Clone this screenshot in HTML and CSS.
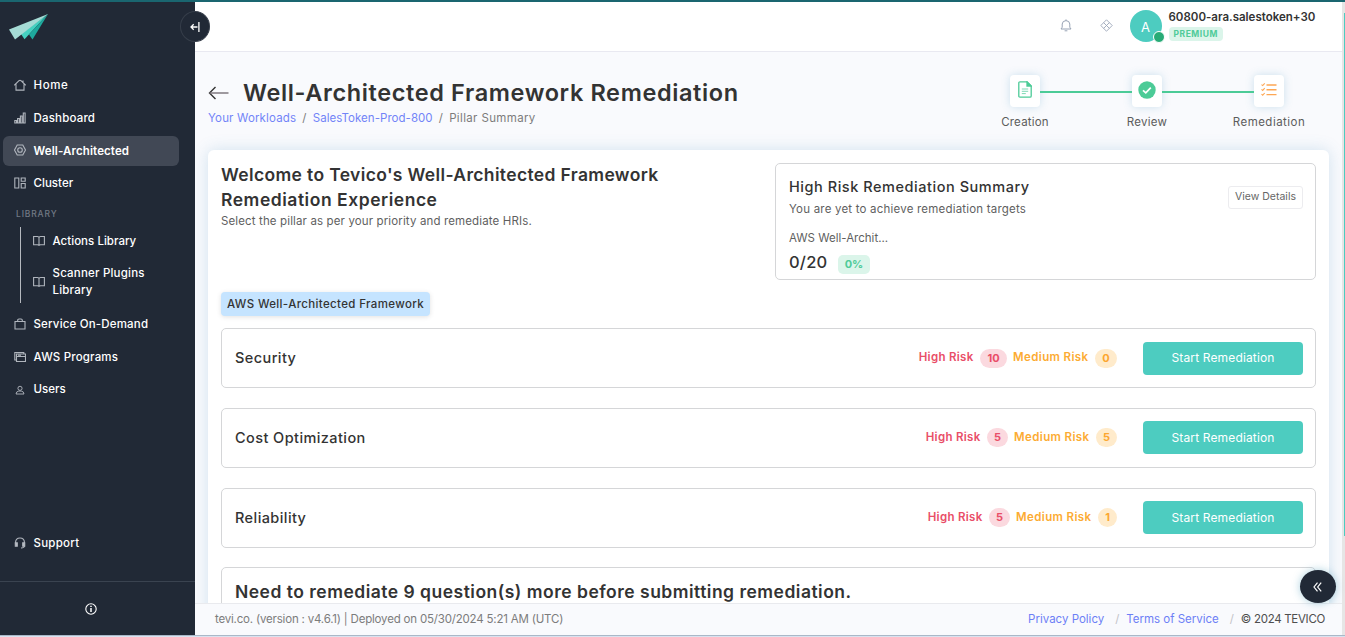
FILE: index.html
```html
<!DOCTYPE html>
<html lang="en">
<head>
<meta charset="utf-8">
<title>Well-Architected Framework Remediation</title>
<link rel="stylesheet" href="styles.css">
</head>
<body>
<div class="app">
  <aside class="sidebar">
    <svg class="logo" width="40" height="26" viewBox="0 0 40 26">
      <path d="M12 20L39 0L15.500 25.200z" fill="#45d0c0"/>
      <path d="M20 20.500L39 0L23.500 25.500z" fill="#1ea99d"/>
      <path d="M0 15.500L39 0L6 25.500z" fill="#a5dbd5"/>
    </svg>
    <button class="collapse" aria-label="Collapse sidebar">
      <svg width="10" height="12" viewBox="0 0 10 12" fill="none" stroke="#fff" stroke-width="1.300"><path d="M1 6h6.500M3.700 3.300L1 6l2.700 2.700M8.900 1v10"/></svg>
    </button>
    <nav class="nav">
      <a class="item home"><svg class="ico" viewBox="0 0 12 12"><path d="M.3 6.300L5 1.700Q6 .9 7 1.700L11.700 6.300M2 5.200v5.900h8V5.200M9 3.300V1.500"/></svg><span>Home</span></a>
      <a class="item"><svg class="ico" viewBox="0 0 12 12"><path d="M.8 8.500h1.700v2.500H.8zM3.600 6.500h1.700V11H3.600zM6.400 4h1.700v7H6.400zM9.300 1h1.800v10H9.300z"/></svg><span>Dashboard</span></a>
      <a class="item active"><svg class="ico" viewBox="0 0 12 12"><path d="M3.200 1h5.600l2.700 5-2.700 5H3.200L.5 6z"/><circle cx="6" cy="6" r="2.300"/></svg><span>Well-Architected</span></a>
      <a class="item tight"><svg class="ico" viewBox="0 0 12 12"><path d="M.8 1h4v10h-4zM7.200 1h4v3.300h-4zM7.200 6.500h4V11h-4z"/></svg><span>Cluster</span></a>
      <div class="group">LIBRARY</div>
      <div class="tree">
        <a class="item tight"><svg class="ico" viewBox="0 0 12 12"><path d="M.6 1.500H4.500Q6 1.500 6 2.500Q6 1.500 7.500 1.500h3.900v8.300H7.500Q6 9.800 6 10.700Q6 9.800 4.500 9.800H.6zM6 2.500v8"/></svg><span>Actions Library</span></a>
        <a class="item two"><svg class="ico" viewBox="0 0 12 12"><path d="M.6 1.500H4.500Q6 1.500 6 2.500Q6 1.500 7.500 1.500h3.900v8.300H7.500Q6 9.800 6 10.700Q6 9.800 4.500 9.800H.6zM6 2.500v8"/></svg><span>Scanner Plugins<br>Library</span></a>
      </div>
      <a class="item"><svg class="ico up" viewBox="0 0 12 12"><path d="M1 3.500h10V11H1zM3.700 3.500V2.200Q3.700 1 5 1h2Q8.300 1 8.300 2.200v1.300"/></svg><span>Service On-Demand</span></a>
      <a class="item"><svg class="ico" viewBox="0 0 12 12"><path d="M2.500 3h9v7.500h-9zM2.500 5.500h9M2.500 9H.8V1.500h9V3M4 4.300h3"/></svg><span>AWS Programs</span></a>
      <a class="item tight users"><svg class="ico small" viewBox="0 0 12 12"><circle cx="6" cy="4" r="2.500"/><path d="M1.200 10.800Q1.500 7.500 4.500 7.300H7.500Q10.500 7.500 10.800 10.800z"/></svg><span>Users</span></a>
    </nav>
    <a class="item support"><svg class="ico" viewBox="0 0 12 12"><path d="M1.500 7.500V5.500Q1.800 1 6 1Q10.200 1 10.500 5.500V9Q10.300 11 7 11"/><path d="M1.300 5.700h2v3.600h-2zM8.700 5.700h2v3.600h-2z" fill="#b9bec6"/></svg><span>Support</span></a>
    <div class="info">
      <svg width="12" height="12" viewBox="0 0 12 12" fill="none" stroke="#fff"><circle cx="6" cy="6" r="5.200" stroke-width="1.100"/><path d="M6 5v4M6 2.800v1.300" stroke-width="1.500"/></svg>
    </div>
  </aside>

  <div class="page">
    <header class="topbar">
      <svg class="bell" width="12" height="13" viewBox="0 0 12 13" fill="none" stroke="#98a3b5"><path d="M1 10h10L9.800 8.200V5Q9.600 1.800 6 1.600Q2.400 1.800 2.200 5v3.200zM6 .4v1.200M4.600 11.800h2.800"/></svg>
      <svg class="apps" width="13" height="13" viewBox="0 0 13 13" fill="none" stroke="#9aa5b8" stroke-width=".9"><path d="M6.500 .8l5.700 5.700-5.700 5.700L.8 6.500zM3.650 3.650l5.700 5.700M9.350 3.650l-5.700 5.700"/></svg>
      <div class="avatar">A<i class="status"></i></div>
      <div class="user"><b class="name">60800-ara.salestoken+30</b><span class="plan">PREMIUM</span></div>
    </header>

    <main class="content">
      <div class="heading">
        <div>
          <div class="title-row">
            <svg width="21" height="14" viewBox="0 0 21 14" fill="none" stroke="#333" stroke-width="1.400"><path d="M7.500 1L1.500 7l6 6"/><path d="M1.500 7h19" stroke="#776f76"/></svg>
            <h1>Well-Architected Framework Remediation</h1>
          </div>
          <div class="crumbs"><a>Your Workloads</a><i>/</i><a class="c2">SalesToken-Prod-800</a><i>/</i><span>Pillar Summary</span></div>
        </div>
        <div class="steps">
          <div class="step"><div class="box"><svg width="14" height="17" viewBox="0 0 14 17" fill="none" stroke="#4ccb97" stroke-width="1.300"><path d="M.8 2Q.8 .8 2 .8H9L13.200 5V15Q13.200 16.200 12 16.200H2Q.8 16.200 .8 15z"/><path d="M9 .8V5h4.200z" fill="#4ccb97"/><path d="M3.800 8h6.400M3.800 10.300h6.400M3.800 12.600h4" stroke-width="1" stroke="#7fd9b5"/></svg></div><span>Creation</span></div>
          <div class="step"><div class="box"><svg width="18" height="18" viewBox="0 0 18 18"><circle cx="9" cy="9" r="8.700" fill="#4ccb97"/><path d="M5 9.300l2.800 2.600 5-5.300" fill="none" stroke="#fff" stroke-width="1.700"/></svg></div><span class="rv">Review</span></div>
          <div class="step"><div class="box"><svg class="list" width="16" height="13" viewBox="0 0 16 13" fill="none" stroke="#fda754" stroke-width="1.400"><path d="M5.500 2H15.500M5.500 6.800H15.500M5.500 11.600H15.500"/><path d="M.5 1.600l1.200 1L3.700 .4M.5 6.400l1.200 1 2-2.200M.5 11.200l1.200 1 2-2.200" stroke-width="1.100"/></svg></div><span class="rm">Remediation</span></div>
        </div>
      </div>

      <section class="card">
        <div class="intro">
          <div class="welcome">
            <h2>Welcome to Tevico's Well-Architected Framework<br><span>Remediation Experience</span></h2>
            <p>Select the pillar as per your priority and remediate HRIs.</p>
          </div>
          <div class="summary">
            <div>
              <h3>High Risk Remediation Summary</h3>
              <p class="note">You are yet to achieve remediation targets</p>
              <p class="frame">AWS Well-Archit...</p>
              <div class="score"><b>0/20</b><span>0%</span></div>
            </div>
            <button class="details">View Details</button>
          </div>
        </div>
        <div class="chip">AWS Well-Architected Framework</div>
        <div class="pillars">
          <div class="pillar"><h4>Security</h4><div class="risks first"><span class="high">High Risk</span><em class="hb wide">10</em><span class="med">Medium Risk</span><em class="mb">0</em></div><button class="start">Start Remediation</button></div>
          <div class="pillar"><h4>Cost Optimization</h4><div class="risks"><span class="high">High Risk</span><em class="hb">5</em><span class="med">Medium Risk</span><em class="mb">5</em></div><button class="start">Start Remediation</button></div>
          <div class="pillar"><h4>Reliability</h4><div class="risks"><span class="high">High Risk</span><em class="hb">5</em><span class="med">Medium Risk</span><em class="mb one">1</em></div><button class="start">Start Remediation</button></div>
          <div class="pillar submit"><h2>Need to remediate 9 question(s) more before submitting remediation.</h2></div>
        </div>
      </section>
    </main>

    <footer class="footer">
      <span class="version">tevi.co. (version : v4.6.1) | Deployed on 05/30/2024 5:21 AM (UTC)</span>
      <a>Privacy Policy</a><i>/</i><a>Terms of Service</a><i>/</i><span class="copy">© 2024 TEVICO</span>
    </footer>
    <button class="fab" aria-label="Open panel"><svg width="9" height="10" viewBox="0 0 9 10" fill="none" stroke="#fff" stroke-width="1.200"><path d="M4.500 .6L1 5l3.500 4.400M8.200 .6L4.700 5l3.500 4.400"/></svg></button>
  </div>
  <div class="scrollbar"><div class="thumb"></div></div>
</div>
</body>
</html>
```
FILE: styles.css
```css
* { box-sizing: border-box; }
body { margin: 0; font-family: Inter, "Open Sans", sans-serif; font-size: 11.5px; color: #333; background: #d9e3f0; overflow: hidden; }
h1, h2, h3, h4, p { margin: 0; }
button { font: inherit; border: 0; padding: 0; }
i, em { font-style: normal; }
svg { display: block; flex: none; }

.app { display: flex; height: 636px; border-top: 2px solid #1a6670; border-bottom: 1px solid #aab8c8; }

.sidebar { position: relative; width: 195px; flex: none; background: #212936; display: flex; flex-direction: column; color: #fff; }
.logo { margin: 12px 0 0 9px; }
.collapse { position: absolute; left: 180px; top: 9px; width: 30px; height: 31px; border-radius: 50%; background: #212936; border: 1px solid #363e4a; display: flex; align-items: center; justify-content: center; z-index: 3; }
.nav { margin-top: 30.500px; display: flex; flex-direction: column; gap: 2.7px; }
.item { height: 30px; margin: 0 16px 0 3px; padding-left: 11px; border-radius: 6px; display: flex; align-items: center; gap: 7.500px; font-size: 11.5px; font-weight: 500; letter-spacing: .18px; line-height: 17px; }
.item.home { letter-spacing: .6px; }
.item.tight { letter-spacing: .03px; }
.item.active { background: #414855; font-weight: 600; letter-spacing: .12px; }
.item.active span { padding-top: 1px; }
.item.users { margin-top: -.7px; }
.ico { width: 12px; height: 12px; margin-top: -1px; fill: none; stroke: #b0b5bd; stroke-width: 1.100; }
.ico.small { width: 10px; height: 10px; margin: 1px 1px 0; }
.ico.up { margin-top: -2px; }
.group { margin: 3.500px 0 0 16px; height: 16px; line-height: 18px; font-size: 8.5px; font-weight: 500; letter-spacing: .85px; color: #727985; }
.tree { margin: 3.600px 0 4px 20px; height: 76px; border-left: 1px solid #b5b9bf; display: flex; flex-direction: column; }
.tree .item { margin: 1px 0 0 1px; }
.tree .two { height: 46px; margin-top: 5.500px; letter-spacing: .2px; }
.support { margin-top: auto; margin-bottom: 23px; letter-spacing: .25px; }
.info { height: 54px; border-top: 1px solid #3a4350; padding: 21px 0 0 85px; }

.page { position: relative; flex: 1; min-width: 0; display: flex; flex-direction: column; background: #f9fafd; }
.topbar { height: 50px; flex: none; background: #fff; border-bottom: 1px solid #e9e9f1; display: flex; align-items: center; justify-content: flex-end; padding-right: 26.5px; }
.bell { margin: -2px 27.500px 0 0; }
.apps { margin: -2px 17px 0 0; }
.avatar { position: relative; width: 32px; height: 32px; margin: -1px 7px 0 0; border-radius: 50%; background: #4dccc0; color: #fff; font-size: 13px; line-height: 34px; text-align: center; }
.status { position: absolute; right: -3px; bottom: -1px; width: 12px; height: 12px; border-radius: 50%; background: #27ab76; border: 1px solid #fff; }
.user { width: 147px; margin-top: -3px; }
.name { display: block; font-weight: 600; line-height: 15px; white-space: nowrap; }
.plan { display: inline-block; height: 14px; margin-top: 2px; padding: 0 5px; border-radius: 4px; background: #dbf5ea; color: #4fcb99; font-size: 8.5px; font-weight: 700; line-height: 14px; letter-spacing: .52px; vertical-align: top; }

.content { flex: 1; min-height: 0; overflow: hidden; padding: 22px 13px 0; }
.heading { display: flex; justify-content: space-between; height: 76px; }
.title-row { display: flex; align-items: center; gap: 14px; height: 38px; }
h1 { font-size: 23.5px; font-weight: 600; letter-spacing: .62px; line-height: 38px; white-space: nowrap; }
.crumbs { display: flex; line-height: 14px; margin-top: -1px; letter-spacing: .16px; color: #7c7c7c; }
.crumbs a { color: #7284f8; }
.crumbs .c2 { letter-spacing: .04px; }
.crumbs span { letter-spacing: .36px; }
.crumbs i { width: 16.500px; text-align: center; }
.steps { width: 366px; margin-right: -1px; display: grid; grid-template-columns: repeat(3, 122px); }
.step { position: relative; display: flex; flex-direction: column; align-items: center; letter-spacing: .2px; line-height: 14px; color: #5c5c5c; }
.step + .step::before { content: ""; position: absolute; left: -46px; width: 92px; top: 17px; height: 2px; background: #4ccb97; }
.box { width: 30px; height: 32px; margin: 1px 0 8px; padding-bottom: 3px; border-radius: 4px; background: #fff; box-shadow: 0 0 8px rgba(70, 150, 190, .25); display: flex; align-items: center; justify-content: center; }
.rv { letter-spacing: .3px; }
.rm { letter-spacing: .48px; }

.card { height: 600px; width: 1121px; padding: 13px; border-radius: 6px; background: #fff; box-shadow: 0 0 16px rgba(70, 140, 185, .22); }
.intro { display: flex; justify-content: space-between; height: 117px; }
h2 { font-size: 17.5px; font-weight: 600; letter-spacing: .35px; line-height: 25px; white-space: nowrap; }
h2 span { letter-spacing: .53px; }
.welcome h2 { margin-top: -1px; }
.welcome p { line-height: 16px; margin-top: 1px; letter-spacing: .13px; color: #5f5f5f; }
.summary { width: 541px; height: 117px; border: 1px solid #d5d6d8; border-radius: 5px; padding: 12px 12px 0 13px; display: flex; justify-content: space-between; }
h3 { font-size: 14.5px; font-weight: 500; letter-spacing: .54px; line-height: 21px; }
.note { line-height: 16px; margin-top: 4px; letter-spacing: .2px; color: #5f5f5f; }
.frame { line-height: 16px; margin-top: 13px; color: #5f5f5f; }
.score { display: flex; align-items: center; margin-top: 5px; height: 22px; }
.score b { font-size: 16.5px; font-weight: 500; letter-spacing: .2px; width: 49px; }
.score span { width: 32px; height: 19px; margin-top: 4px; border-radius: 5px; background: #dbf5ea; color: #4fcb99; font-size: 11px; font-weight: 700; line-height: 19px; text-align: center; }
.details { width: 75px; height: 23px; margin-top: 10px; padding-bottom: 1px; border: 1px solid #ececef; border-radius: 3px; background: #fff; color: #666; font-size: 10.5px; line-height: 18px; }
.chip { width: 209px; height: 24px; margin: 12px 0; border-radius: 4px; background: #c5e4ff; box-shadow: 0 1px 5px rgba(0, 0, 0, .12); font-weight: 500; letter-spacing: .36px; line-height: 24px; text-align: center; white-space: nowrap; }
.pillars { display: flex; flex-direction: column; gap: 19.500px; }
.pillar { height: 60.300px; flex: none; border: 1px solid #d5d6d8; border-radius: 5px; padding: 0 12px 0 13px; display: flex; align-items: center; }
h4 { font-size: 14.5px; font-weight: 500; letter-spacing: .42px; flex: 1; margin-top: -1px; }
.risks { display: flex; align-items: center; margin-right: 26px; font-weight: 600; letter-spacing: .38px; }
.high { color: #e94e68; margin: -2px 6.500px 0 0; letter-spacing: .3px; }
.med { color: #fcab33; margin: -2px 6.500px 0 0; }
.risks em { height: 19px; min-width: 21px; padding: 0 6px; border-radius: 10px; text-align: center; line-height: 19px; font-size: 11px; font-weight: 700; letter-spacing: 0; }
.first .mb { min-width: 22px; }
.hb { background: #fbd9df; color: #e94e68; margin-right: 6px; }
.risks .wide { min-width: 27px; }
.mb { background: #ffebcb; color: #fca62f; }
.risks .one { min-width: 19px; }
.start { width: 160px; height: 33px; border-radius: 4px; background: #4dccc0; color: #fff; font-size: 12px; letter-spacing: .15px; line-height: 32px; }
.submit { height: 90px; align-items: flex-start; padding-top: 11px; }
.submit h2 { letter-spacing: .49px; }

.footer { height: 32px; flex: none; z-index: 1; border-top: 1px solid #e9eaee; background: #f9fafd; padding: 0 17px 1px 20px; display: flex; align-items: center; white-space: nowrap; }
.version { flex: 1; color: #7c7c7c; letter-spacing: -.19px; }
.footer a { color: #6d80f6; }
.footer i { width: 22px; padding-left: 11px; color: #c3c3c8; }
.footer i + .copy { letter-spacing: -.3px; color: #4e4e4e; }
.fab { position: absolute; left: 1105px; top: 568px; width: 36px; height: 33px; border-radius: 50%; background: #212936; box-shadow: 0 0 8px rgba(50, 140, 175, .4); display: flex; align-items: center; justify-content: center; padding-right: 2px; z-index: 3; }

.scrollbar { width: 3px; flex: none; background: #e6e6e6; padding: 11px 0 0 2px; }
.thumb { height: 523px; background: #4dccc0; }
```
